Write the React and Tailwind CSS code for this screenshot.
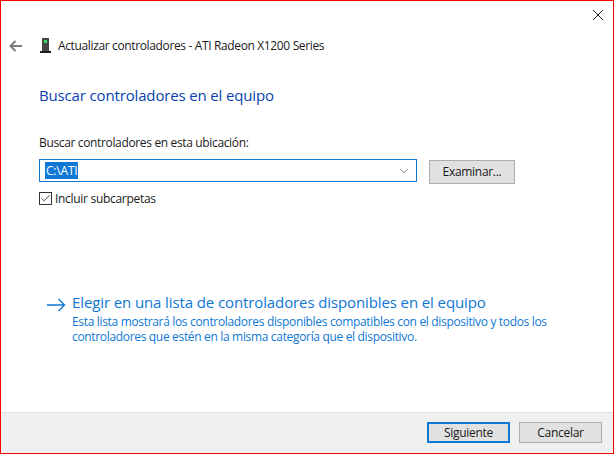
import { Check, ChevronDown } from 'lucide-react';

const font = { fontFamily: '"Open Sans", sans-serif' };

function BackArrow() {
    return (
        <svg width="13" height="12" viewBox="0 0 13 12" fill="none" stroke="#7d7d7d" strokeWidth="2">
            <path d="M13 6H1.5M6.5 1L1.5 6l5 5" />
        </svg>
    );
}

function DeviceIcon() {
    return (
        <svg width="11" height="15" viewBox="0 0 11 15">
            <rect x="2" y="0" width="7" height="13" fill="#454545" />
            <rect x="0" y="13" width="11" height="2" fill="#1f1f1f" />
            <rect x="4" y="2" width="3" height="3" fill="#2ee06a" />
        </svg>
    );
}

function LinkArrow() {
    return (
        <svg width="19" height="14" viewBox="0 0 19 14" fill="none" stroke="#0f78d4" strokeWidth="1.4">
            <path d="M0 7h17.5M11.5 1l6 6-6 6" />
        </svg>
    );
}

export default function App() {
    return (
        <div className="w-[614px] h-[454px] bg-white border border-[#ff0000] flex flex-col text-[12px] text-[#1a1a1a] overflow-hidden" style={font}>
            {/* Close */}
            <div className="h-[37px] flex justify-end pr-[10px] pt-[9px] shrink-0">
                <svg width="10" height="10" viewBox="0 0 10 10" stroke="#222" strokeWidth="1" fill="none">
                    <path d="M0 0l10 10M10 0L0 10" />
                </svg>
            </div>

            {/* Title bar */}
            <div className="h-[15px] flex items-center pl-[8px] shrink-0">
                <BackArrow />
                <div className="ml-[18px]"><DeviceIcon /></div>
                <span className="ml-[7px] tracking-[-0.36px] leading-none whitespace-nowrap">Actualizar controladores - ATI Radeon X1200 Series</span>
            </div>

            {/* Content */}
            <div className="flex-1 pl-[38px] pt-[32px]">
                <h1 className="text-[15px] leading-[20px] text-[#0a3fb0] tracking-[-0.15px] whitespace-nowrap">Buscar controladores en el equipo</h1>

                <p className="mt-[30px] leading-[16px] tracking-[-0.35px] whitespace-nowrap">Buscar controladores en esta ubicación:</p>

                <div className="mt-[8px] flex items-start">
                    <div className="w-[378px] h-[23px] border border-[#0f78d4] flex items-center justify-between pl-[5px] pr-[5px]">
                        <span className="bg-[#0f78d4] text-white h-[17px] leading-[17px] px-px tracking-[-0.2px]">C:\ATI</span>
                        <ChevronDown size={14} strokeWidth={1.4} color="#666" />
                    </div>
                    <button className="ml-[12px] mt-px w-[86px] h-[24px] bg-[#e1e1e1] border border-[#adadad] leading-none tracking-[-0.3px]">Examinar...</button>
                </div>

                <div className="mt-[8px] flex items-center">
                    <div className="w-[13px] h-[13px] border border-[#333] flex items-center justify-center">
                        <Check size={11} strokeWidth={2} color="#333" />
                    </div>
                    <span className="ml-[3px] leading-none tracking-[-0.3px] whitespace-nowrap">Incluir subcarpetas</span>
                </div>

                <div className="mt-[87px] flex items-start pl-[8px]">
                    <div className="mt-[6px] shrink-0"><LinkArrow /></div>
                    <div className="ml-[6px]">
                        <p className="text-[15px] leading-[20px] text-[#0f78d4] tracking-[-0.11px] whitespace-nowrap">Elegir en una lista de controladores disponibles en el equipo</p>
                        <p className="mt-[2px] w-[500px] leading-[15px] text-[#0f78d4] tracking-[-0.33px]">
                            Esta lista mostrará los controladores disponibles compatibles con el dispositivo y todos los
                            <br />
                            controladores que estén en la misma categoría que el dispositivo.
                        </p>
                    </div>
                </div>
            </div>

            {/* Footer */}
            <div className="h-[41px] shrink-0 bg-[#f0f0f0] border-t border-[#dfdfdf] flex justify-end items-start pt-[9px] pr-[11px] gap-[9px]">
                <button className="w-[83px] h-[21px] bg-[#e1e1e1] border-2 border-[#0f78d4] leading-none tracking-[-0.3px]">Siguiente</button>
                <button className="w-[83px] h-[21px] bg-[#e1e1e1] border border-[#adadad] leading-none tracking-[-0.3px]">Cancelar</button>
            </div>
        </div>
    );
}
